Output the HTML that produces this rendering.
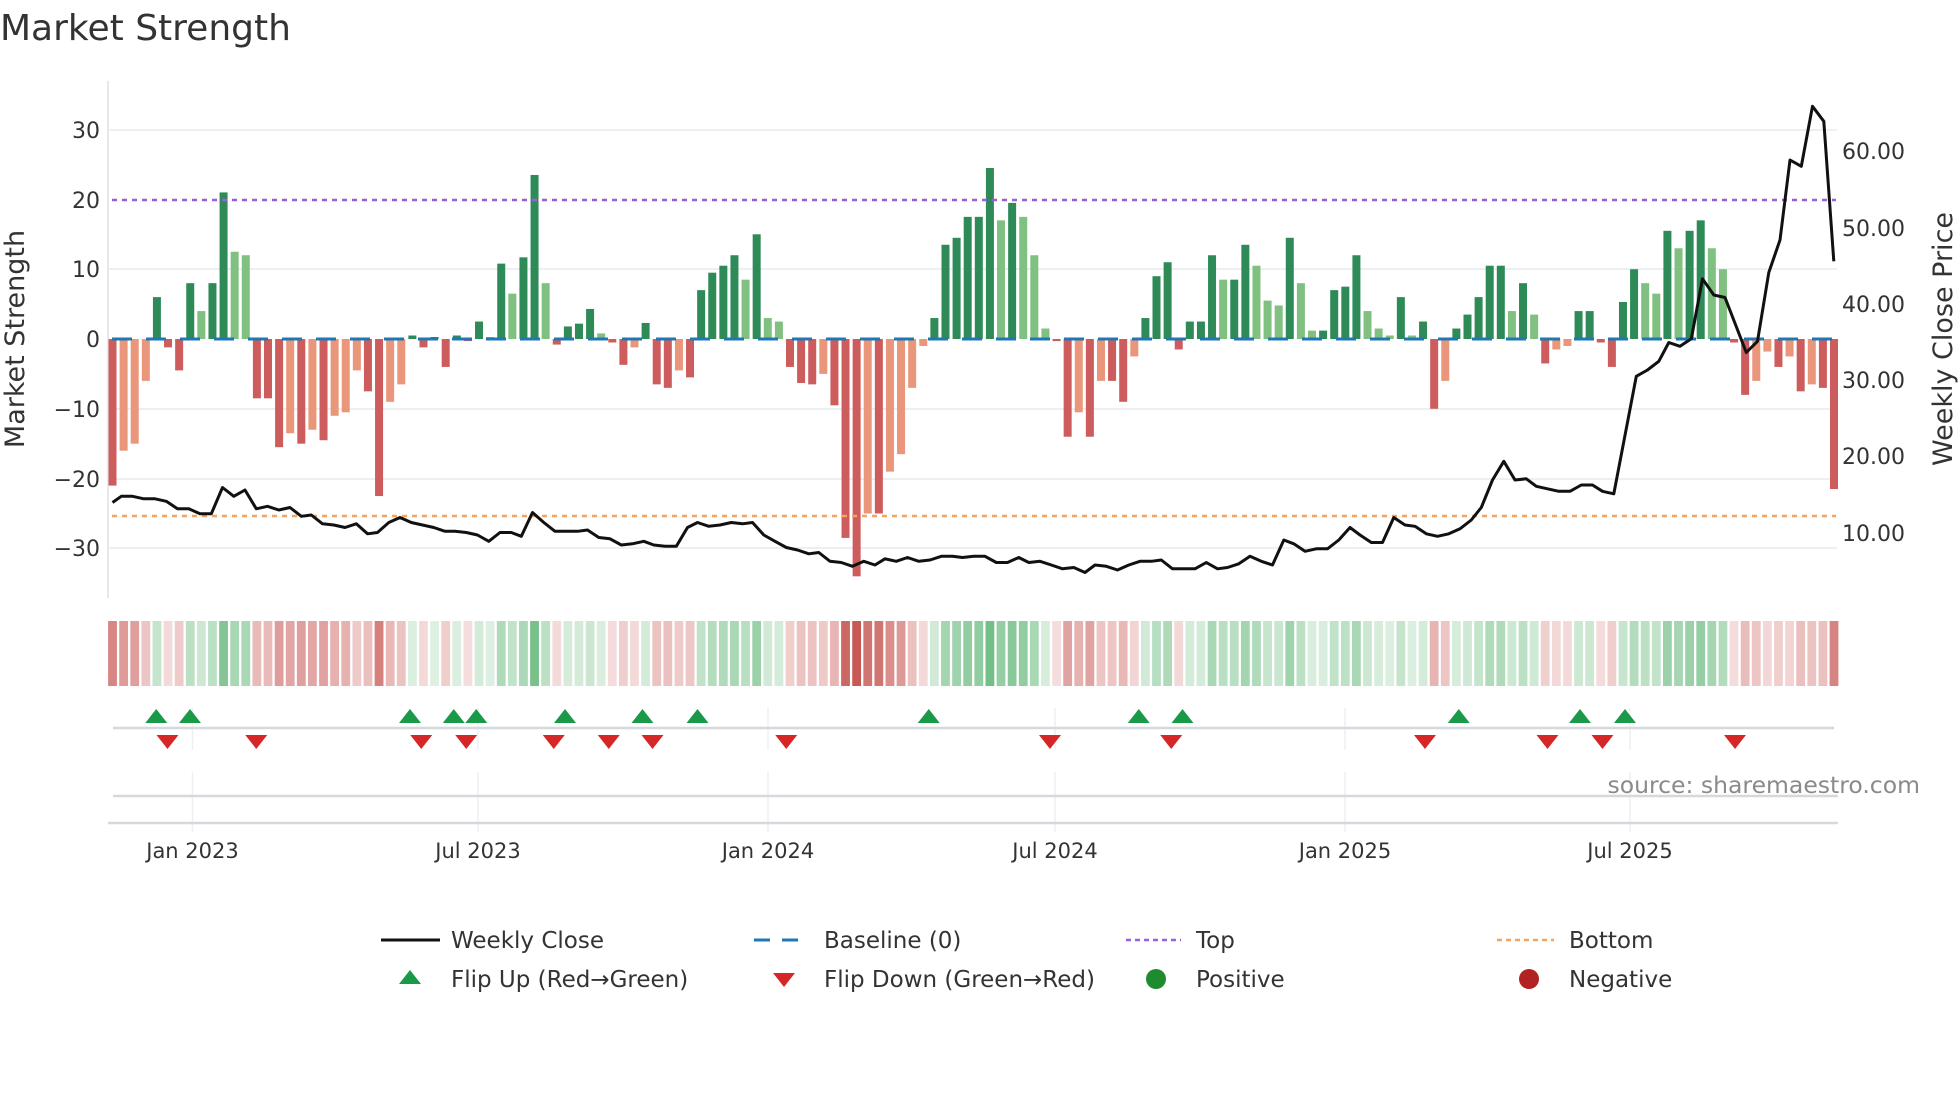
<!DOCTYPE html>
<html><head><meta charset="utf-8">
<style>
html,body{margin:0;padding:0;background:#fff;}
svg{display:block;font-family:"DejaVu Sans","Liberation Sans",sans-serif;}
</style></head>
<body>
<svg id="s" width="1960" height="1102" viewBox="0 0 1960 1102" xmlns="http://www.w3.org/2000/svg">
<text x="0" y="40" font-size="36" fill="#333">Market Strength</text>
<g id="grid" stroke="#eceff3" stroke-width="2">
<line x1="109" x2="1837" y1="130" y2="130"/>
<line x1="109" x2="1837" y1="269" y2="269"/>
<line x1="109" x2="1837" y1="409" y2="409"/>
<line x1="109" x2="1837" y1="479" y2="479"/>
<line x1="109" x2="1837" y1="548" y2="548"/>
</g>
<line x1="108" x2="108" y1="81" y2="598" stroke="#e6e8ec" stroke-width="2"/>
<g font-size="22" fill="#333" text-anchor="end">
<text x="100" y="138">30</text>
<text x="100" y="208">20</text>
<text x="100" y="277">10</text>
<text x="100" y="347">0</text>
<text x="100" y="417">−10</text>
<text x="100" y="487">−20</text>
<text x="100" y="556">−30</text>
</g>
<g font-size="22" fill="#333">
<text x="1842" y="159">60.00</text>
<text x="1842" y="236">50.00</text>
<text x="1842" y="312">40.00</text>
<text x="1842" y="388">30.00</text>
<text x="1842" y="464">20.00</text>
<text x="1842" y="541">10.00</text>
</g>
<text transform="translate(24,339) rotate(-90)" font-size="27" fill="#333" text-anchor="middle">Market Strength</text>
<text transform="translate(1952,339) rotate(-90)" font-size="27" fill="#333" text-anchor="middle">Weekly Close Price</text>
<g id="bars"></g>
<line x1="112" x2="1836" y1="339" y2="339" stroke="#1f77b4" stroke-width="3" stroke-dasharray="20,14"/>
<line x1="112" x2="1836" y1="200" y2="200" stroke="#9b5fd9" stroke-width="2.5" stroke-dasharray="5,5"/>
<line x1="112" x2="1836" y1="516" y2="516" stroke="#f4a460" stroke-width="2.5" stroke-dasharray="5,5"/>
<polyline id="price" fill="none" stroke="#111" stroke-width="3" stroke-linejoin="round"/>
<g id="heat"></g>
<g stroke="#eceff3" stroke-width="1.5">
<line x1="192.5" x2="192.5" y1="708" y2="750"/><line x1="478" x2="478" y1="708" y2="750"/>
<line x1="768" x2="768" y1="708" y2="750"/><line x1="1055" x2="1055" y1="708" y2="750"/>
<line x1="1345" x2="1345" y1="708" y2="750"/><line x1="1630" x2="1630" y1="708" y2="750"/>
<line x1="192.5" x2="192.5" y1="772" y2="832"/><line x1="478" x2="478" y1="772" y2="832"/>
<line x1="768" x2="768" y1="772" y2="832"/><line x1="1055" x2="1055" y1="772" y2="832"/>
<line x1="1345" x2="1345" y1="772" y2="832"/><line x1="1630" x2="1630" y1="772" y2="832"/>
</g>
<line x1="113" x2="1834" y1="728" y2="728" stroke="#d6d8dc" stroke-width="2.5"/>
<line x1="113" x2="1838" y1="796" y2="796" stroke="#d6d8dc" stroke-width="2.5"/>
<line x1="108" x2="1838" y1="823" y2="823" stroke="#d6d8dc" stroke-width="2.5"/>
<g id="marks"></g>
<text x="1920" y="793" font-size="23.5" fill="#8a8a8a" text-anchor="end">source: sharemaestro.com</text>
<g font-size="21" fill="#333" text-anchor="middle">
<text x="192.5" y="858">Jan 2023</text>
<text x="478" y="858">Jul 2023</text>
<text x="768" y="858">Jan 2024</text>
<text x="1055" y="858">Jul 2024</text>
<text x="1345" y="858">Jan 2025</text>
<text x="1630" y="858">Jul 2025</text>
</g>
<g font-size="23" fill="#333">
<line x1="381" x2="440" y1="940" y2="940" stroke="#111" stroke-width="3"/>
<text x="451" y="948">Weekly Close</text>
<line x1="754" x2="806" y1="940" y2="940" stroke="#1f77b4" stroke-width="3" stroke-dasharray="16,12"/>
<text x="824" y="948">Baseline (0)</text>
<line x1="1126" x2="1181" y1="940" y2="940" stroke="#9b5fd9" stroke-width="2.5" stroke-dasharray="5,4"/>
<text x="1196" y="948">Top</text>
<line x1="1497" x2="1554" y1="940" y2="940" stroke="#f4a460" stroke-width="2.5" stroke-dasharray="5,4"/>
<text x="1569" y="948">Bottom</text>
<polygon points="399,984 421,984 410,970" fill="#1a9a48"/>
<text x="451" y="987">Flip Up (Red→Green)</text>
<polygon points="773,973 795,973 784,987" fill="#d62728"/>
<text x="824" y="987">Flip Down (Green→Red)</text>
<circle cx="1156" cy="979" r="10" fill="#1e8c2e"/>
<text x="1196" y="987">Positive</text>
<circle cx="1529" cy="979" r="10" fill="#b22222"/>
<text x="1569" y="987">Negative</text>
</g>
</svg>
<script>
var V=[-21,-16,-15,-6,6,-1.2,-4.5,8,4,8,21,12.5,12,
-8.5,-8.5,-15.5,-13.5,-15,-13,-14.5,-11,-10.5,-4.5,-7.5,-22.5,-9,-6.5,
0.5,-1.2,0,-4,0.5,-0.3,2.5,0.2,10.8,6.5,11.7,23.5,8,
-0.8,1.8,2.2,4.3,0.8,-0.5,-3.7,-1.2,2.3,
-6.5,-7,-4.5,-5.5,
7,9.5,10.5,12,8.5,15,3,2.5,
-4,-6.3,-6.5,-5,-9.5,-28.5,-34,-25,-25,-19,-16.5,-7,-1,
3,13.5,14.5,17.5,17.5,24.5,17,19.5,17.5,12,1.5,
-0.3,
-14,-10.5,-14,-6,-6,-9,-2.5,
3,9,11,-1.5,2.5,2.5,12,8.5,8.5,13.5,10.5,5.5,4.8,14.5,8,1.2,1.2,7,7.5,12,4,1.5,0.5,6,0.5,2.5,
-10,-6,1.5,3.5,6,10.5,10.5,4,8,3.5,
-3.5,-1.5,-1,4,4,-0.5,-4,
5.3,10,8,6.5,15.5,13,15.5,17,13,10,
-0.5,-8,-6,-1.8,-4,-2.5,-7.5,-6.5,-7,-21.5];
var NS="http://www.w3.org/2000/svg";
function el(t,a,p){var e=document.createElementNS(NS,t);for(var k in a)e.setAttribute(k,a[k]);p.appendChild(e);return e;}
var bars=document.getElementById('bars'),heat=document.getElementById('heat');
var step=(1834-112.5)/155, z=339, k=6.98;
for(var i=0;i<V.length;i++){
 var v=V[i],p=i?V[i-1]:0,x=112.5+i*step,c;
 if(v>=0){c=(v>=p)?'#2e8b57':'#80c080';}else{c=(v<=p)?'#cd5c5c':'#e9967a';}
 var h=Math.abs(v)*k; if(h<2)h=2;
 el('rect',{x:x-4,y:v>=0?z-h:z,width:8,height:h,fill:c},bars);
 var a=0.18+0.75*Math.min(Math.abs(v)/32,1);
 var hc=v>=0?'rgba(70,170,95,'+a+')':'rgba(195,75,70,'+a+')';
 el('rect',{x:x-4.4,y:621,width:8.8,height:65,fill:hc},heat);
}
var P=[[90,402],[97,397],[106,397],[115,399],[124,399],[133,401],[142,407],[151,407],[160,411],[169,411],[178,390],[187,397],[196,392],[205,407],[214,405],[223,408],[232,406],[241,413],[249,412],[258,419],[267,420],[276,422],[285,419],[294,427],[302,426],[311,418],[320,414],[329,418],[338,420],[347,422],[356,425],[364,425],[373,426],[382,428],[391,433],[400,426],[409,426],[417,429],[426,410],[435,418],[444,425],[453,425],[462,425],[470,424],[479,430],[488,431],[497,436],[506,435],[515,433],[523,436],[532,437],[541,437],[550,422],[558,418],[567,421],[576,420],[585,418],[594,419],[602,418],[611,428],[620,433],[629,438],[638,440],[647,443],[655,442],[664,449],[673,450],[682,453],[691,449],[700,452],[708,447],[717,449],[726,446],[735,449],[744,448],[753,445],[762,445],[770,446],[779,445],[788,445],[797,450],[806,450],[815,446],[823,450],[832,449],[841,452],[850,455],[859,454],[868,458],[876,452],[885,453],[894,456],[903,452],[912,449],[921,449],[929,448],[938,455],[947,455],[956,455],[965,450],[974,455],[982,454],[991,451],[1000,445],[1009,449],[1018,452],[1027,432],[1035,435],[1044,441],[1053,439],[1062,439],[1071,432],[1080,422],[1088,428],[1097,434],[1106,434],[1115,414],[1124,420],[1132,421],[1141,427],[1150,429],[1159,427],[1168,423],[1177,416],[1185,406],[1194,384],[1203,369],[1212,384],[1221,383],[1229,389],[1238,391],[1247,393],[1256,393],[1265,388],[1274,388],[1282,393],[1291,395],[1309,301],[1318,296],[1327,289],[1335,274],[1344,277],[1353,271],[1362,223],[1371,236],[1380,238],[1397,282],[1406,273],[1415,218],[1424,192],[1432,128],[1441,133],[1450,85],[1459,97],[1467,209]];
document.getElementById('price').setAttribute('points',P.map(function(q){return (q[0]*1.25).toFixed(1)+','+(q[1]*1.25).toFixed(1);}).join(' '));
var marks=document.getElementById('marks');
[125,152,328,363,381,452,514,558,743,911,946,1167,1264,1300].forEach(function(d){var x=d*1.25;el('polygon',{points:(x-11)+',723 '+(x+11)+',723 '+x+',709',fill:'#1a9a48'},marks);});
[134,205,337,373,443,487,522,629,840,937,1140,1238,1282,1388].forEach(function(d){var x=d*1.25;el('polygon',{points:(x-11)+',735 '+(x+11)+',735 '+x+',749',fill:'#d62728'},marks);});
</script>
</body></html>
